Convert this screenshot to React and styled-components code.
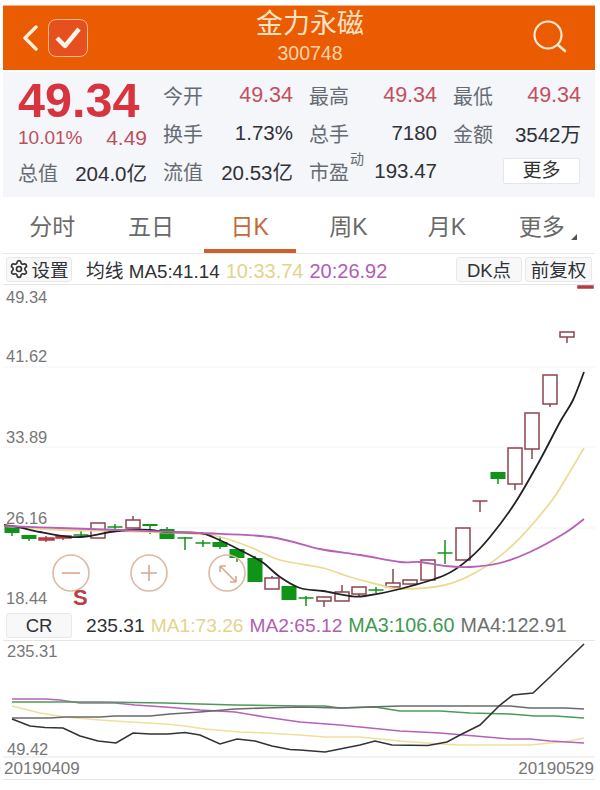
import React from "react";
import styled, { createGlobalStyle } from "styled-components";
import { Settings } from "lucide-react";

const Global = createGlobalStyle`
  html, body { margin: 0; padding: 0; background: #fff; }
  body { font-family: "Liberation Sans", "Noto Sans CJK SC", sans-serif; }
`;

const Page = styled.div`
  width: 592px;
  padding: 5px 5px 0 3px;
  color: #333;
`;

const Header = styled.header`
  height: 65px;
  background: #ea5b02;
  border-top: 1px solid #f6b27c;
  box-sizing: border-box;
  display: flex;
  align-items: center;
  padding: 0 27px 0 19px;
`;
const Back = styled.svg`
  width: 16px;
  height: 26px;
  margin-right: 10px;
`;
const CheckBox = styled.div`
  width: 40px;
  height: 38px;
  box-sizing: border-box;
  border: 1px solid #f9bb8b;
  border-radius: 8px;
  background: #e6501f;
  display: flex;
  align-items: center;
  justify-content: center;
`;
const Title = styled.div`
  flex: 1;
  text-align: center;
  color: #fde3c6;
  padding-bottom: 3px;
`;
const Name = styled.div`
  font-size: 27px;
  line-height: 33px;
`;
const Code = styled.div`
  font-size: 19.5px;
  line-height: 24px;
  color: #fcd3a8;
`;

const Info = styled.section`
  margin-top: 2px;
  height: 125px;
  box-sizing: border-box;
  background: #f4f6fa;
  padding: 4px 13px 0 15px;
  display: flex;
`;
const PriceBlock = styled.div`
  width: 145px;
  flex: none;
  box-sizing: border-box;
  padding-right: 16px;
`;
const Price = styled.div`
  height: 46px;
  line-height: 48px;
  font-size: 48.5px;
  font-weight: 700;
  color: #d8343f;
  white-space: nowrap;
`;
const ChangeRow = styled.div`
  height: 31px;
  display: flex;
  align-items: center;
  justify-content: space-between;
  color: #bd4f5c;
`;
const ChangeValue = styled.span`
  font-size: ${(p) => p.$size}px;
`;
const StatGrid = styled.div`
  flex: 1;
  display: grid;
  grid-template-columns: 130px 128px 128px;
  grid-auto-rows: 38px;
  column-gap: 16px;
`;
const Stat = styled.div`
  display: flex;
  align-items: center;
  justify-content: space-between;
  height: 38px;
  font-size: 20px;
  white-space: nowrap;
`;
const StatLabel = styled.span`
  color: #666b73;
  position: relative;
`;
const Sup = styled.sup`
  position: absolute;
  left: 41px;
  top: -5px;
  font-size: 14px;
  line-height: 1;
`;
const StatValue = styled.span`
  color: ${(p) => (p.$red ? "#c2505f" : "#2f3136")};
  font-size: ${(p) => (p.$red ? 21.5 : 20.5)}px;
`;
const MoreCell = styled.div`
  display: flex;
  align-items: center;
  justify-content: flex-end;
`;
const MoreBtn = styled.div`
  width: 77px;
  height: 26px;
  margin-right: 1px;
  box-sizing: border-box;
  background: #fff;
  border: 1px solid #e6e6e8;
  border-radius: 2px;
  font-size: 19px;
  line-height: 24px;
  text-align: center;
  color: #333;
`;

const Tabs = styled.nav`
  height: 57px;
  display: grid;
  grid-template-columns: repeat(6, 1fr);
  border-bottom: 1px solid #e6e6e6;
  box-sizing: border-box;
`;
const Tab = styled.div`
  position: relative;
  display: flex;
  align-items: center;
  justify-content: center;
  padding-bottom: 1px;
  padding-right: ${(p) => p.$pr || 0}px;
  font-size: 23px;
  color: ${(p) => (p.$active ? "#c4683a" : "#6a6a6a")};
  ${(p) =>
    p.$active &&
    `&::after{content:"";position:absolute;left:4px;right:3px;bottom:0;height:4px;background:#d0602a;}`}
`;
const Corner = styled.i`
  position: absolute;
  right: 18px;
  bottom: 13px;
  width: 0;
  height: 0;
  border-left: 6px solid transparent;
  border-bottom: 6px solid #555;
`;

const Bar = styled.div`
  height: ${(p) => p.$h}px;
  box-sizing: border-box;
  border-bottom: 1px solid #e6e6e6;
  display: flex;
  align-items: center;
  padding: 0 3px;
`;
const ToolBtn = styled.div`
  height: 25px;
  width: ${(p) => p.$w}px;
  margin-left: ${(p) => p.$ml || 0}px;
  box-sizing: border-box;
  flex: none;
  display: flex;
  align-items: center;
  justify-content: center;
  gap: 2px;
  background: #f8f8f8;
  border: 1px solid #e8e8e8;
  border-radius: 3px;
  font-size: 18.5px;
  color: #2f3136;
`;
const Legend = styled.div`
  flex: 1;
  display: flex;
  align-items: baseline;
  gap: 6px;
  margin-left: 14px;
  white-space: nowrap;
`;
const LegendItem = styled.span`
  color: ${(p) => p.$c};
  font-size: ${(p) => p.$size}px;
`;
const ChartSvg = styled.svg`
  display: block;
  width: 592px;
`;
const AxisLabel = styled.text`
  font-family: "Liberation Sans", sans-serif;
  font-size: 16.5px;
  fill: #777;
`;
const SellMark = styled.text`
  font-family: "Liberation Sans", sans-serif;
  font-size: 22px;
  font-weight: 700;
  fill: #b5404a;
`;
const DateRow = styled.div`
  height: 22px;
  display: flex;
  justify-content: space-between;
  align-items: center;
  border-bottom: 1px solid #e6e6e6;
  box-sizing: border-box;
  padding: 1px 1px 0;
  font-size: 17px;
  color: #777;
`;

const RED = "#8e434c";
const GREEN = "#0e9416";
// x, bodyTop, bodyBottom, high, low, kind
const candles = [
  [12, 527, 533, 527, 536, "g"],
  [29, 535, 539, 535, 541, "g"],
  [46, 538, 540, 536, 542, "f"],
  [63, 536, 538, 535, 540, "f"],
  [81, 535, 536, 530, 537, "d"],
  [98, 523, 538, 523, 538, "r"],
  [115, 527, 528, 524, 531, "d"],
  [133, 520, 528, 516, 528, "r"],
  [150, 524, 526, 524, 534, "g"],
  [167, 529, 539, 527, 539, "g"],
  [185, 538, 539, 537, 550, "d"],
  [203, 543, 544, 540, 547, "d"],
  [220, 542, 547, 536, 549, "g"],
  [237, 549, 558, 549, 562, "g"],
  [255, 558, 582, 556, 582, "g"],
  [272, 578, 589, 576, 589, "r"],
  [289, 586, 600, 586, 600, "g"],
  [306, 598, 599, 596, 606, "d"],
  [324, 597, 601, 597, 607, "r"],
  [342, 592, 601, 585, 601, "r"],
  [359, 587, 594, 587, 596, "r"],
  [376, 590, 591, 587, 593, "d"],
  [393, 583, 587, 569, 587, "r"],
  [410, 580, 584, 580, 584, "r"],
  [428, 560, 580, 560, 581, "r"],
  [445, 553, 554, 540, 564, "d"],
  [463, 528, 560, 528, 560, "r"],
  [480, 501, 502, 501, 512, "t"],
  [498, 472, 479, 472, 484, "g"],
  [515, 448, 484, 448, 490, "r"],
  [532, 413, 449, 413, 459, "r"],
  [550, 375, 404, 375, 407, "r"],
  [567, 332, 337, 332, 343, "f2"],
  [585, 286, 288, 286, 288, "f"],
];

const Candle = ({ c: [x, t, b, hi, lo, k] }) => {
  const green = k === "g" || k === "d";
  const col = green ? GREEN : k === "f" ? "#b33c46" : RED;
  const w = k === "r" || k === "f2" ? 14 : 15;
  if (k === "d" || k === "t") {
    return (
      <g stroke={k === "t" ? RED : GREEN} strokeWidth="1.5">
        <line x1={x - 7.5} x2={x + 7.5} y1={t} y2={t} />
        <line x1={x} x2={x} y1={hi} y2={lo} />
      </g>
    );
  }
  return (
    <g>
      <line x1={x} x2={x} y1={hi} y2={lo} stroke={col} strokeWidth="1.5" />
      {k === "g" ? (
        <rect x={x - 7.5} y={t} width={w} height={b - t} fill={GREEN} />
      ) : (
        <rect x={x - 7} y={t} width={w} height={b - t} fill={k === "f" ? col : "#fff"} stroke={col} strokeWidth="1.5" />
      )}
    </g>
  );
};

const pts = (a) => a.map((p) => p.join(",")).join(" ");
// Catmull-Rom spline through the points, for the moving averages of the price chart
const smooth = (a) => {
  let d = `M${a[0][0]} ${a[0][1]}`;
  for (let i = 0; i < a.length - 1; i++) {
    const p0 = a[i - 1] || a[i];
    const p1 = a[i];
    const p2 = a[i + 1];
    const p3 = a[i + 2] || p2;
    const c1x = p1[0] + (p2[0] - p0[0]) / 6;
    const c1y = p1[1] + (p2[1] - p0[1]) / 6;
    const c2x = p2[0] - (p3[0] - p1[0]) / 6;
    const c2y = p2[1] - (p3[1] - p1[1]) / 6;
    d += ` C${c1x} ${c1y} ${c2x} ${c2y} ${p2[0]} ${p2[1]}`;
  }
  return d;
};
const ma5 = [[4,525],[18,527],[40,532],[70,537],[90,536],[110,532],[130,530],[150,530],[167,532],[200,533],[215,538],[240,550],[262,562],[280,577],[300,588],[323,591],[350,596],[365,596],[400,589],[445,575],[470,558],[490,537],[515,503],[540,460],[560,422],[573,400],[584,372]];
const ma10 = [[4,526],[60,530],[120,531],[200,534],[220,537],[250,547],[280,560],[323,568],[350,577],[380,585],[400,589],[445,585],[480,570],[515,543],[550,503],[565,480],[584,448]];
const ma20 = [[4,526],[60,528],[120,530],[200,533],[270,537],[320,549],[360,555],[400,562],[420,562],[445,566],[470,567],[500,563],[530,552],[565,533],[584,519]];

const crBlack = [[12,719],[30,726],[45,727.5],[63,728],[80,736],[98,741],[116,743],[133,733],[150,734],[168,734],[185,732.5],[200,735],[220,744],[237,739],[255,741],[272,746],[290,749.5],[300,750],[325,752],[360,745],[375,741],[392,745],[428,745.5],[447,742],[460,735],[480,725],[500,705],[513,695],[533,693],[550,677],[584,644]];
const crPurple = [[12,699],[45,699],[60,700],[80,703],[115,703],[135,705],[165,707],[200,710],[235,712],[265,717],[300,722],[340,725],[360,727],[400,731],[440,733],[475,736],[510,739],[530,739],[550,741],[584,743]];
const crGreen = [[12,702],[60,702],[100,702],[165,703],[235,705],[300,706],[325,706],[340,708],[375,707],[400,711],[440,711],[470,713],[510,714],[535,716],[555,716],[584,718]];
const crGrey = [[12,718],[50,718],[65,717],[100,717],[115,716],[150,716],[170,714],[200,712],[235,709],[265,708],[300,707],[340,708],[400,706],[510,706],[530,708],[565,708],[584,709]];
const crYellow = [[12,706],[40,713],[65,717],[100,720],[130,722],[165,724],[185,726],[205,729],[240,732],[265,733],[300,735],[325,737],[360,737],[400,741],[440,744],[460,745],[530,745],[550,743],[570,741],[584,738]];

const ZoomCircle = ({ cx, children }) => (
  <g fill="none" stroke="#dcb9a4" strokeWidth="1.6">
    <circle cx={cx} cy="573" r="18" />
    <g stroke="#d9a78d">{children}</g>
  </g>
);

const Row = ({ label, value, red, sup }) => (
  <Stat>
    <StatLabel>
      {label}
      {sup && <Sup>{sup}</Sup>}
    </StatLabel>
    <StatValue $red={red}>{value}</StatValue>
  </Stat>
);

export default function App() {
  return (
    <Page>
      <Global />
      <Header>
        <Back viewBox="0 0 16 26">
          <path d="M14 2 L3 13 L14 24" fill="none" stroke="#fdeedd" strokeWidth="3.4" strokeLinecap="round" strokeLinejoin="round" />
        </Back>
        <CheckBox>
          <svg width="28" height="24" viewBox="0 0 28 24">
            <path d="M3 12 L11 20 L25 3" fill="none" stroke="#fff2e6" strokeWidth="4.4" strokeLinejoin="round" />
          </svg>
        </CheckBox>
        <Title>
          <Name>金力永磁</Name>
          <Code>300748</Code>
        </Title>
        <svg width="36" height="36" viewBox="0 0 36 36">
          <circle cx="16" cy="15" r="13.5" fill="none" stroke="#fde9d4" strokeWidth="2.2" />
          <path d="M26 25 L33 31" stroke="#fde9d4" strokeWidth="2.6" strokeLinecap="round" />
        </svg>
      </Header>

      <Info>
        <PriceBlock>
          <Price>49.34</Price>
          <ChangeRow>
            <ChangeValue $size={19}>10.01%</ChangeValue>
            <ChangeValue $size={21}>4.49</ChangeValue>
          </ChangeRow>
          <Stat>
            <StatLabel>总值</StatLabel>
            <StatValue>204.0亿</StatValue>
          </Stat>
        </PriceBlock>
        <StatGrid>
          <Row label="今开" value="49.34" red />
          <Row label="最高" value="49.34" red />
          <Row label="最低" value="49.34" red />
          <Row label="换手" value="1.73%" />
          <Row label="总手" value="7180" />
          <Row label="金额" value="3542万" />
          <Row label="流值" value="20.53亿" />
          <Row label="市盈" sup="动" value="193.47" />
          <MoreCell>
            <MoreBtn>更多</MoreBtn>
          </MoreCell>
        </StatGrid>
      </Info>

      <Tabs>
        <Tab>分时</Tab>
        <Tab>五日</Tab>
        <Tab $active>日K</Tab>
        <Tab>周K</Tab>
        <Tab>月K</Tab>
        <Tab $pr={8}>
          更多
          <Corner />
        </Tab>
      </Tabs>

      <Bar $h={31}>
        <ToolBtn $w={66}>
          <Settings size={20} strokeWidth={2} color="#333" />
          设置
        </ToolBtn>
        <Legend>
          <LegendItem $c="#2f3136" $size={18.8}>均线 MA5:41.14</LegendItem>
          <LegendItem $c="#e3d48c" $size={20}>10:33.74</LegendItem>
          <LegendItem $c="#b25db4" $size={20}>20:26.92</LegendItem>
        </Legend>
        <ToolBtn $w={66}>DK点</ToolBtn>
        <ToolBtn $w={67} $ml={3}>前复权</ToolBtn>
      </Bar>

      <ChartSvg viewBox="3 285 592 326" height="326">
        {[367, 447, 528].map((y) => (
          <line key={y} x1="3" x2="595" y1={y} y2={y} stroke="#f3f3f3" />
        ))}
        <AxisLabel x="6" y="303">49.34</AxisLabel>
        <AxisLabel x="6" y="362">41.62</AxisLabel>
        <AxisLabel x="6" y="443">33.89</AxisLabel>
        <AxisLabel x="6" y="524">26.16</AxisLabel>
        <AxisLabel x="6" y="604">18.44</AxisLabel>
        {candles.map((c, i) => (
          <Candle key={i} c={c} />
        ))}
        <path d={smooth(ma10)} fill="none" stroke="#ecdb97" strokeWidth="1.8" />
        <path d={smooth(ma5)} fill="none" stroke="#222" strokeWidth="1.8" />
        <path d={smooth(ma20)} fill="none" stroke="#b85fb8" strokeWidth="1.8" />
        <ZoomCircle cx={71}>
          <path d="M62 573 H80" />
        </ZoomCircle>
        <ZoomCircle cx={149}>
          <path d="M141 573 H157 M149 565 V581" />
        </ZoomCircle>
        <ZoomCircle cx={227}>
          <path d="M220 566 L236 582 M220 566 h6 M220 566 v6 M236 582 h-6 M236 582 v-6" />
        </ZoomCircle>
        <SellMark x="73" y="605">S</SellMark>
      </ChartSvg>

      <Bar $h={30}>
        <ToolBtn $w={66}>CR</ToolBtn>
        <Legend>
          <LegendItem $c="#2f3136" $size={19.2}>235.31</LegendItem>
          <LegendItem $c="#e3d48c" $size={19.2}>MA1:73.26</LegendItem>
          <LegendItem $c="#b25db4" $size={19.2}>MA2:65.12</LegendItem>
          <LegendItem $c="#3f9a4f" $size={19.7}>MA3:106.60</LegendItem>
          <LegendItem $c="#6f6f6f" $size={19.7}>MA4:122.91</LegendItem>
        </Legend>
      </Bar>

      <ChartSvg viewBox="3 641 592 117" height="117">
        <AxisLabel x="7" y="657">235.31</AxisLabel>
        <AxisLabel x="7" y="755">49.42</AxisLabel>
        <line x1="3" x2="595" y1="757" y2="757" stroke="#e6e6e6" />
        <polyline points={pts(crYellow)} fill="none" stroke="#efdf9f" strokeWidth="1.6" />
        <polyline points={pts(crPurple)} fill="none" stroke="#b562b8" strokeWidth="1.6" />
        <polyline points={pts(crGreen)} fill="none" stroke="#4e9a5a" strokeWidth="1.6" />
        <polyline points={pts(crGrey)} fill="none" stroke="#6a6a6a" strokeWidth="1.6" />
        <polyline points={pts(crBlack)} fill="none" stroke="#333" strokeWidth="1.6" />
      </ChartSvg>

      <DateRow>
        <span>20190409</span>
        <span>20190529</span>
      </DateRow>
    </Page>
  );
}
